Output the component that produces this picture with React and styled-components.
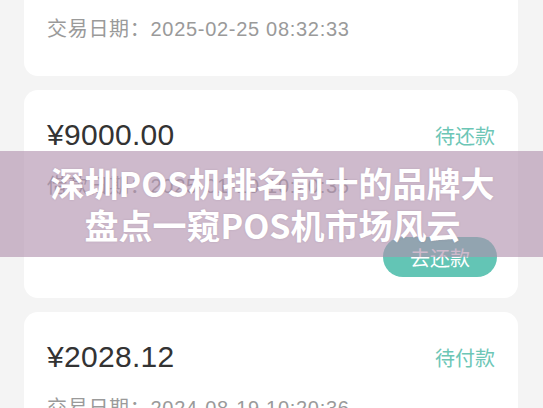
import React from "react";
import styled, { createGlobalStyle } from "styled-components";

const GlobalStyle = createGlobalStyle`
  html, body {
    margin: 0;
    padding: 0;
    background: #f4f4f4;
    overflow: hidden;
  }
  body {
    font-family: "Liberation Sans", "Noto Sans CJK SC", sans-serif;
  }
`;

const Screen = styled.div`
  position: relative;
  width: 543px;
  height: 408px;
  overflow: hidden;
  background: #f4f4f4;
`;

const List = styled.div`
  display: flex;
  flex-direction: column;
  gap: 14px;
  padding: 0 25px 0 24px;
  margin-top: -67px;
`;

const Card = styled.div`
  background: #ffffff;
  border-radius: 14px;
  padding: 25px 23px ${(p) => (p.$withAction ? "21px" : "33px")} 23px;
`;

const AmountRow = styled.div`
  display: flex;
  justify-content: space-between;
  align-items: center;
  height: 40px;
`;

const Amount = styled.div`
  font-size: 30px;
  color: #333333;
  letter-spacing: 0.3px;
`;

const Status = styled.div`
  font-size: 20px;
  color: #6cc6b6;
  font-family: "Noto Sans CJK SC", sans-serif;
`;

const DateLine = styled.div`
  margin-top: 17px;
  font-size: 20px;
  line-height: 28px;
  letter-spacing: 0.7px;
  color: #9a9a9a;
  white-space: nowrap;
`;

const ActionRow = styled.div`
  display: flex;
  justify-content: flex-end;
  margin-top: 37px;
`;

const ActionButton = styled.button`
  width: 114px;
  height: 40px;
  border: none;
  border-radius: 20px;
  background: #63c5b5;
  color: #ffffff;
  font-size: 20px;
  font-family: "Noto Sans CJK SC", sans-serif;
  padding: 0;
  margin-right: -2px;
`;

const Banner = styled.div`
  position: absolute;
  left: 0;
  right: 0;
  top: 151px;
  height: 106px;
  box-sizing: border-box;
  padding: 11px 44px 0 46px;
  background: rgba(176, 143, 172, 0.62);
  color: #ffffff;
  text-align: center;
  font-family: "Noto Sans CJK SC", sans-serif;
  font-weight: 700;
  font-size: 34px;
  line-height: 42px;
  text-shadow: 0 0 2px rgba(120, 90, 120, 0.25);
`;

const orders = [
  { amount: "¥5000.00", status: "已完成", label: "交易日期", date: "2025-02-25 08:32:33" },
  { amount: "¥9000.00", status: "待还款", label: "借款日期", date: "2025-01-10 10:20:35", action: "去还款" },
  { amount: "¥2028.12", status: "待付款", label: "交易日期", date: "2024-08-19 10:20:36" },
];

export default function App() {
  return (
    <>
      <GlobalStyle />
      <Screen>
        <List>
          {orders.map((o, i) => (
            <Card key={i} $withAction={!!o.action}>
              <AmountRow>
                <Amount>{o.amount}</Amount>
                <Status>{o.status}</Status>
              </AmountRow>
              <DateLine>
                {o.label}：{o.date}
              </DateLine>
              {o.action && (
                <ActionRow>
                  <ActionButton>{o.action}</ActionButton>
                </ActionRow>
              )}
            </Card>
          ))}
        </List>
        <Banner>深圳POS机排名前十的品牌大盘点一窥POS机市场风云</Banner>
      </Screen>
    </>
  );
}
